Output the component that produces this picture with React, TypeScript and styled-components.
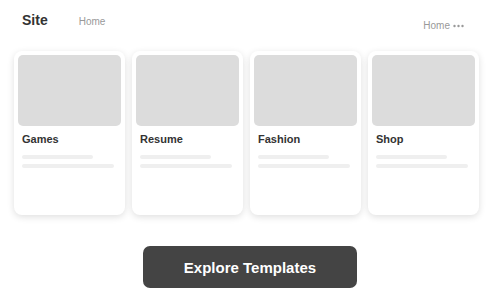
import React from 'react'
import styled, { createGlobalStyle } from 'styled-components'

interface ITemplate {
  title: string
}

const templates: ITemplate[] = [
  { title: 'Games' },
  { title: 'Resume' },
  { title: 'Fashion' },
  { title: 'Shop' },
]

const App: React.FC = () => {
  return (
    <>
      <GlobalStyle />
      <Page>
        <Header>
          <Brand>
            <Logo>Site</Logo>
            <NavLink>Home</NavLink>
          </Brand>
          <RightNav>
            <NavLink>Home</NavLink>
            <svg width="11" height="4" viewBox="0 0 11 4">
              <circle cx="1.5" cy="2" r="1.2" fill="#999" />
              <circle cx="5.5" cy="2" r="1.2" fill="#999" />
              <circle cx="9.5" cy="2" r="1.2" fill="#999" />
            </svg>
          </RightNav>
        </Header>

        <Cards>
          {templates.map((t) => (
            <Card key={t.title}>
              <Thumb />
              <CardBody>
                <CardTitle>{t.title}</CardTitle>
                <Line width={71} />
                <Line width={92} />
              </CardBody>
            </Card>
          ))}
        </Cards>

        <Footer>
          <ExploreButton>Explore Templates</ExploreButton>
        </Footer>
      </Page>
    </>
  )
}

export default App



// Styled
const GlobalStyle = createGlobalStyle`
  body {
    margin: 0;
    background: #fff;
    font-family: "Liberation Sans", Arial, sans-serif;
  }
`

const Page = styled.div`
  width: 500px;
  height: 303px;
  overflow: hidden;
`

const Header = styled.header`
  display: flex;
  justify-content: space-between;
  align-items: flex-start;
  box-sizing: border-box;
  height: 51px;
  padding: 12px 36px 0 22px;
`

const Brand = styled.div`
  display: flex;
  align-items: baseline;
  gap: 31px;
`

const Logo = styled.span`
  font-size: 14px;
  line-height: 16px;
  font-weight: 700;
  color: #333;
`

const NavLink = styled.span`
  font-size: 10px;
  line-height: 12px;
  color: #999;
`

const RightNav = styled.div`
  display: flex;
  align-items: center;
  gap: 3px;
  margin-top: 8px;

  svg {
    margin-top: 0;
  }
`

const Cards = styled.div`
  display: grid;
  grid-template-columns: repeat(4, 111px);
  gap: 7px;
  padding-left: 14px;
`

const Card = styled.div`
  box-sizing: border-box;
  height: 164px;
  padding: 4px;
  border-radius: 8px;
  background: #fff;
  box-shadow: 0 2px 7px rgba(0, 0, 0, 0.13);
`

const Thumb = styled.div`
  height: 71px;
  border-radius: 5px;
  background: #dcdcdc;
`

const CardBody = styled.div`
  display: flex;
  flex-direction: column;
  padding: 7px 4px 0;
`

const CardTitle = styled.div`
  font-size: 11px;
  line-height: 13px;
  font-weight: 700;
  color: #333;
  margin-bottom: 9px;
`

const Line = styled.div<{ width: number }>`
  width: ${({ width }) => width}px;
  height: 4px;
  border-radius: 2px;
  background: #efefef;
  margin-bottom: 5px;
`

const Footer = styled.div`
  display: flex;
  justify-content: center;
  padding-top: 31px;
`

const ExploreButton = styled.button`
  width: 214px;
  height: 42px;
  border: none;
  border-radius: 7px;
  background: #444;
  color: #fff;
  font-family: "Liberation Sans", Arial, sans-serif;
  font-size: 15px;
  font-weight: 700;
  cursor: pointer;
`
